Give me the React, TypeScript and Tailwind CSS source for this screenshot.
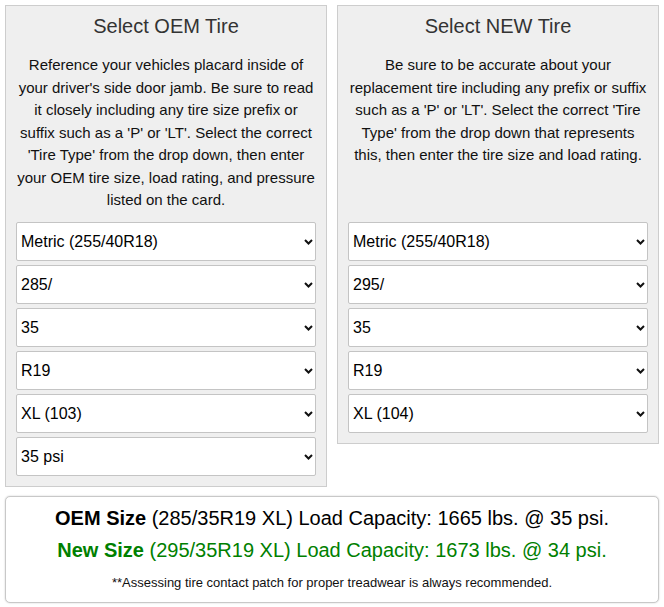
import React, { useState } from 'react';

type Field = { name: string; value: string; options: string[] };

const OEM_FIELDS: Field[] = [
  { name: 'type', value: 'Metric (255/40R18)', options: ['Metric (255/40R18)', 'P-Metric (P255/40R18)', 'LT-Metric (LT255/40R18)'] },
  { name: 'width', value: '285/', options: ['275/', '285/', '295/', '305/'] },
  { name: 'aspect', value: '35', options: ['30', '35', '40', '45'] },
  { name: 'rim', value: 'R19', options: ['R18', 'R19', 'R20'] },
  { name: 'load', value: 'XL (103)', options: ['SL (99)', 'XL (103)', 'XL (104)'] },
  { name: 'pressure', value: '35 psi', options: ['32 psi', '34 psi', '35 psi', '36 psi'] },
];

const NEW_FIELDS: Field[] = [
  { name: 'type', value: 'Metric (255/40R18)', options: ['Metric (255/40R18)', 'P-Metric (P255/40R18)', 'LT-Metric (LT255/40R18)'] },
  { name: 'width', value: '295/', options: ['275/', '285/', '295/', '305/'] },
  { name: 'aspect', value: '35', options: ['30', '35', '40', '45'] },
  { name: 'rim', value: 'R19', options: ['R18', 'R19', 'R20'] },
  { name: 'load', value: 'XL (104)', options: ['SL (99)', 'XL (103)', 'XL (104)'] },
];

const TireSelect: React.FC<{ field: Field }> = ({ field }) => {
  const [value, setValue] = useState(field.value);
  return (
    <div className="relative">
      <select
        name={field.name}
        value={value}
        onChange={(e) => setValue(e.target.value)}
        className="block w-full h-[39px] pl-[4px] pr-6 bg-white border border-[#c4c4c4] rounded-[2px] text-[16px] text-black appearance-none outline-none"
      >
        {field.options.map((o) => (
          <option key={o} value={o}>{o}</option>
        ))}
      </select>
      <svg
        className="absolute right-[3px] top-1/2 -translate-y-1/2 w-[9px] h-[6px] pointer-events-none"
        viewBox="0 0 9 6"
      >
        <path d="M1 1l3.5 3.5L8 1" fill="none" stroke="#111" strokeWidth="2" />
      </svg>
    </div>
  );
};

const Panel: React.FC<{ title: string; text: string; fields: Field[] }> = ({ title, text, fields }) => (
  <div className="w-[322px] bg-[#efefef] border border-[#cdcdcd] px-[10px] pt-[8px] pb-[10px]">
    <h3 className="text-[20px] leading-[24px] text-[#333] text-center">{title}</h3>
    <p className="mt-[16px] h-[158px] text-[15px] leading-[22.5px] text-[#111] text-center">{text}</p>
    <div className="mt-[10px] flex flex-col gap-[4px]">
      {fields.map((f) => (
        <TireSelect key={f.name} field={f} />
      ))}
    </div>
  </div>
);

export default function App() {
  return (
    <div className="w-[664px] min-h-[607px] bg-white px-[5px] pt-[5px] font-['Liberation_Sans',Arial,sans-serif]">
      <div className="flex items-start gap-[10px]">
        <Panel
          title="Select OEM Tire"
          text="Reference your vehicles placard inside of your driver's side door jamb. Be sure to read it closely including any tire size prefix or suffix such as a 'P' or 'LT'. Select the correct 'Tire Type' from the drop down, then enter your OEM tire size, load rating, and pressure listed on the card."
          fields={OEM_FIELDS}
        />
        <Panel
          title="Select NEW Tire"
          text="Be sure to be accurate about your replacement tire including any prefix or suffix such as a 'P' or 'LT'. Select the correct 'Tire Type' from the drop down that represents this, then enter the tire size and load rating."
          fields={NEW_FIELDS}
        />
      </div>

      {/* results */}
      <div className="mt-[9px] h-[107px] bg-white border border-[#c8c8c8] rounded-[5px] shadow-[0_0_2px_rgba(0,0,0,0.2)] pt-[7px] text-center">
        <div className="text-[20px] leading-[28px] text-black">
          <span className="font-bold">OEM Size</span> (285/35R19 XL) Load Capacity: 1665 lbs. @ 35 psi.
        </div>
        <div className="mt-[4px] text-[20px] leading-[28px] text-[#008000]">
          <span className="font-bold">New Size</span> (295/35R19 XL) Load Capacity: 1673 lbs. @ 34 psi.
        </div>
        <div className="mt-[11px] text-[13px] leading-[16px] text-[#111]">
          **Assessing tire contact patch for proper treadwear is always recommended.
        </div>
      </div>
    </div>
  );
}
